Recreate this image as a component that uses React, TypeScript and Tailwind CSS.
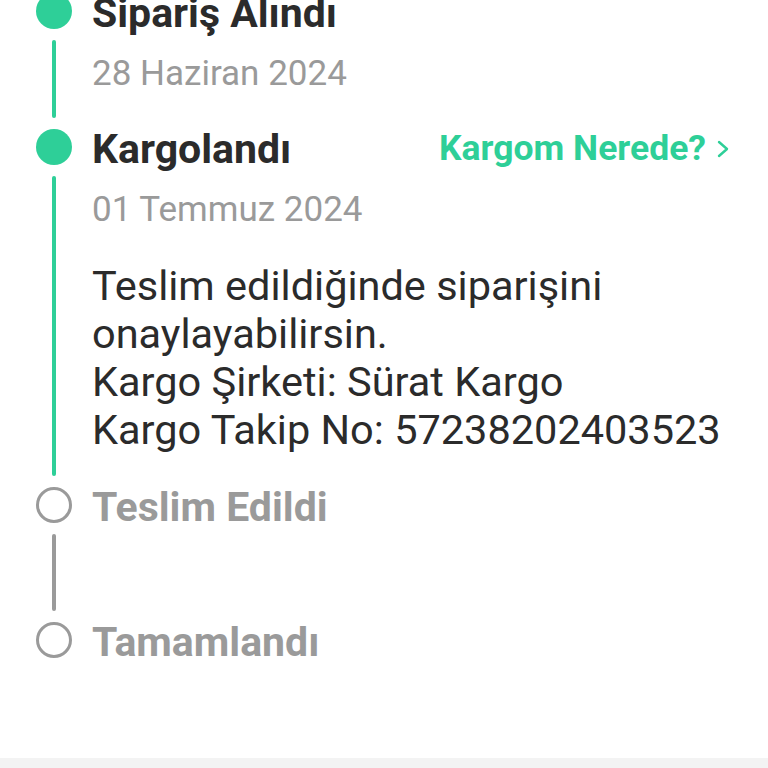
import type { ReactNode } from "react";

type StepProps = {
  done: boolean;
  last?: boolean;
  title: string;
  right?: ReactNode;
  children?: ReactNode;
  pad?: string;
};

function Step({ done, last, title, right, children, pad }: StepProps) {
  return (
    <div className="flex">
      <div className="flex w-[36px] flex-col items-center">
        {done ? (
          <div className="h-[36px] w-[36px] shrink-0 rounded-full bg-[#2ecf98]" />
        ) : (
          <div className="h-[36px] w-[36px] shrink-0 rounded-full border-[3px] border-[#9a9a9a]" />
        )}
        {!last && (
          <div
            className={`my-[11px] w-[4px] flex-1 rounded-full ${
              done ? "bg-[#2ecf98]" : "bg-[#9a9a9a]"
            }`}
          />
        )}
      </div>
      <div className={`ml-[20px] flex-1 ${pad ?? ""}`}>
        <div className="flex h-[40px] items-center justify-between">
          <h3
            className={`text-[41px] font-bold leading-[40px] ${
              done ? "text-[#2b2b2b]" : "text-[#9a9a9a]"
            }`}
          >
            {title}
          </h3>
          {right}
        </div>
        {children}
      </div>
    </div>
  );
}

export default function App() {
  return (
    <div className="flex h-[768px] w-[768px] flex-col overflow-hidden bg-white font-['Roboto',sans-serif]">
      <div className="mt-[-7px] flex-1 pl-[36px] pr-[38px]">
        <Step done title="Sipariş Alındı" pad="pb-[35px]">
          <p className="mt-[21px] text-[35px] leading-[40px] text-[#9a9a9a]">
            28 Haziran 2024
          </p>
        </Step>

        <Step
          done
          title="Kargolandı"
          pad="pb-[33px]"
          right={
            <a className="flex items-center gap-[11px] text-[35.5px] font-bold text-[#2ecf98]">
              Kargom Nerede?
              <svg
                width="13"
                height="18"
                viewBox="0 0 13 18"
                fill="none"
                stroke="#2ecf98"
                strokeWidth="2.4"
                strokeLinecap="round"
                strokeLinejoin="round"
              >
                <path d="M2 2l8 7-8 7" />
              </svg>
            </a>
          }
        >
          <p className="mt-[21px] text-[35px] leading-[40px] text-[#9a9a9a]">
            01 Temmuz 2024
          </p>
          <div className="mt-[32px] text-[41.5px] leading-[48px] text-[#2b2b2b]">
            <p>Teslim edildiğinde siparişini</p>
            <p>onaylayabilirsin.</p>
            <p>Kargo Şirketi: Sürat Kargo</p>
            <p>Kargo Takip No: 57238202403523</p>
          </div>
        </Step>

        <Step done={false} title="Teslim Edildi" pad="pb-[95px]" />

        <Step done={false} last title="Tamamlandı" />
      </div>
      <div className="h-[10px] bg-[#f3f3f3]" />
    </div>
  );
}
